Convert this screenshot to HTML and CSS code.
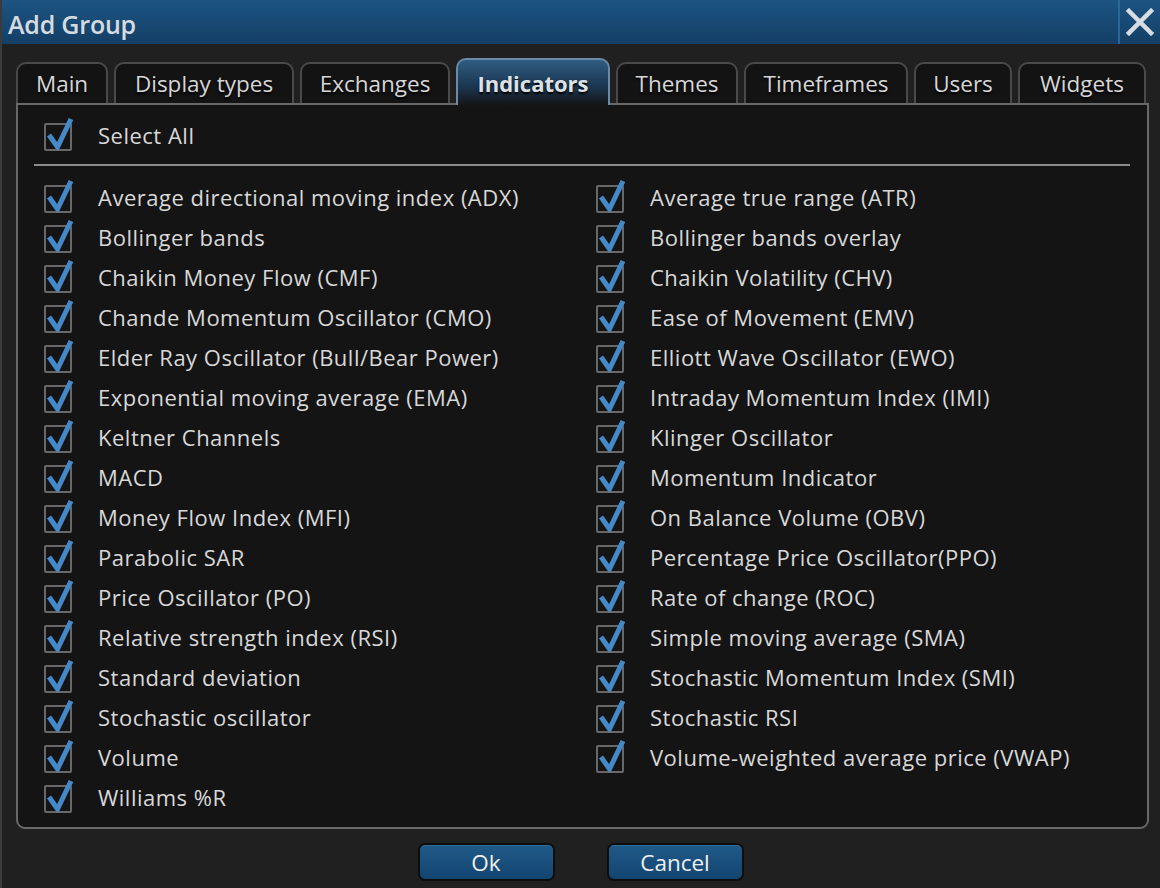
FILE: index.html
```html
<!DOCTYPE html>
<html>
<head>
<meta charset="utf-8">
<link rel="stylesheet" href="styles.css">
</head>
<body>
<div class="window">
  <div class="titlebar">
    <div class="title">Add Group</div>
    <div class="close">
      <svg width="28" height="28" viewBox="0 0 28 28"><path d="M3 3 L25 25 M25 3 L3 25" stroke="#d8dde2" stroke-width="4.5" stroke-linecap="square"/></svg>
    </div>
  </div>
  <div class="content">
    <div class="tabs">
      <div class="tab t-main">Main</div>
      <div class="tab t-display">Display types</div>
      <div class="tab t-exch">Exchanges</div>
      <div class="tab active t-ind">Indicators</div>
      <div class="tab t-themes">Themes</div>
      <div class="tab t-tf">Timeframes</div>
      <div class="tab t-users">Users</div>
      <div class="tab t-widgets">Widgets</div>
    </div>
    <div class="panel">
      <div class="item selectall"><span class="cb"></span><span class="label">Select All</span></div>
      <div class="sep"></div>
      <div class="grid">
        <div class="item"><span class="cb"></span><span class="label">Average directional moving index (ADX)</span></div>
        <div class="item"><span class="cb"></span><span class="label">Average true range (ATR)</span></div>
        <div class="item"><span class="cb"></span><span class="label">Bollinger bands</span></div>
        <div class="item"><span class="cb"></span><span class="label">Bollinger bands overlay</span></div>
        <div class="item"><span class="cb"></span><span class="label">Chaikin Money Flow (CMF)</span></div>
        <div class="item"><span class="cb"></span><span class="label">Chaikin Volatility (CHV)</span></div>
        <div class="item"><span class="cb"></span><span class="label">Chande Momentum Oscillator (CMO)</span></div>
        <div class="item"><span class="cb"></span><span class="label">Ease of Movement (EMV)</span></div>
        <div class="item"><span class="cb"></span><span class="label">Elder Ray Oscillator (Bull/Bear Power)</span></div>
        <div class="item"><span class="cb"></span><span class="label">Elliott Wave Oscillator (EWO)</span></div>
        <div class="item"><span class="cb"></span><span class="label">Exponential moving average (EMA)</span></div>
        <div class="item"><span class="cb"></span><span class="label">Intraday Momentum Index (IMI)</span></div>
        <div class="item"><span class="cb"></span><span class="label">Keltner Channels</span></div>
        <div class="item"><span class="cb"></span><span class="label">Klinger Oscillator</span></div>
        <div class="item"><span class="cb"></span><span class="label">MACD</span></div>
        <div class="item"><span class="cb"></span><span class="label">Momentum Indicator</span></div>
        <div class="item"><span class="cb"></span><span class="label">Money Flow Index (MFI)</span></div>
        <div class="item"><span class="cb"></span><span class="label">On Balance Volume (OBV)</span></div>
        <div class="item"><span class="cb"></span><span class="label">Parabolic SAR</span></div>
        <div class="item"><span class="cb"></span><span class="label">Percentage Price Oscillator(PPO)</span></div>
        <div class="item"><span class="cb"></span><span class="label">Price Oscillator (PO)</span></div>
        <div class="item"><span class="cb"></span><span class="label">Rate of change (ROC)</span></div>
        <div class="item"><span class="cb"></span><span class="label">Relative strength index (RSI)</span></div>
        <div class="item"><span class="cb"></span><span class="label">Simple moving average (SMA)</span></div>
        <div class="item"><span class="cb"></span><span class="label">Standard deviation</span></div>
        <div class="item"><span class="cb"></span><span class="label">Stochastic Momentum Index (SMI)</span></div>
        <div class="item"><span class="cb"></span><span class="label">Stochastic oscillator</span></div>
        <div class="item"><span class="cb"></span><span class="label">Stochastic RSI</span></div>
        <div class="item"><span class="cb"></span><span class="label">Volume</span></div>
        <div class="item"><span class="cb"></span><span class="label">Volume-weighted average price (VWAP)</span></div>
        <div class="item"><span class="cb"></span><span class="label">Williams %R</span></div>
      </div>
    </div>
    <div class="buttons">
      <div class="btn">Ok</div>
      <div class="btn">Cancel</div>
    </div>
  </div>
</div>
</body>
</html>
```
FILE: styles.css
```css
* { box-sizing: border-box; }
html, body { margin: 0; padding: 0; }
body {
  width: 1160px;
  height: 888px;
  background: #202020;
  font-family: "Open Sans", "Noto Sans", sans-serif;
  color: #d8d8d8;
  overflow: hidden;
}
.window {
  width: 1160px;
  height: 888px;
  display: flex;
  flex-direction: column;
  border-left: 2px solid #3a3a3a;
}
.titlebar {
  height: 44px;
  background: linear-gradient(#1c5482, #143f66);
  display: flex;
  align-items: center;
  justify-content: space-between;
}
.title {
  font-size: 25px;
  color: #d6dbe0;
  padding-left: 6px;
  padding-top: 3px;
  font-weight: 600;
  letter-spacing: -0.2px;
}
.close {
  width: 42px;
  height: 44px;
  border-left: 2px solid #2b6898;
  display: flex;
  align-items: center;
  justify-content: center;
}
.content {
  flex: 1;
  padding: 14px 11px 0 14px;
  display: flex;
  flex-direction: column;
}
.tabs {
  display: flex;
  align-items: flex-end;
  height: 45px;
  gap: 6px;
  position: relative;
  z-index: 1;
}
.tab {
  height: 41px;
  background: #131313;
  border: 2px solid #4a4a4a;
  border-bottom: none;
  border-radius: 10px 10px 0 0;
  font-size: 22.5px;
  color: #d6d6d6;
  text-shadow: 0 2px 2px #000;
  display: flex;
  align-items: center;
  justify-content: center;
}
.tab.active {
  background: linear-gradient(#2f5c82, #1b3550 60%, #151515);
  border-color: #6a8aa5;
  font-weight: 700;
  font-size: 22px;
  color: #dde2e6;
  margin-bottom: -2px;
  height: 47px;
}
.t-main { width: 92px; }
.t-display { width: 180px; }
.t-exch { width: 150px; }
.t-ind { width: 154px; }
.t-themes { width: 122px; }
.t-tf { width: 164px; }
.t-users { width: 98px; }
.t-widgets { width: 128px; }
.panel {
  width: 1133px;
  height: 726px;
  background: #141414;
  border: 2px solid #686868;
  border-radius: 0 0 9px 9px;
  padding: 11px 0 0 26px;
}
.item {
  display: flex;
  align-items: center;
  height: 40px;
}
.cb {
  width: 28px;
  height: 28px;
  border: 2px solid #686868;
  border-radius: 2px;
  position: relative;
  flex: none;
  margin-top: 2px;
}
.cb::after {
  content: "";
  position: absolute;
  left: 0;
  top: -9px;
  width: 28px;
  height: 34px;
  background: url("data:image/svg+xml;utf8,<svg xmlns='http://www.w3.org/2000/svg' width='28' height='34' viewBox='0 0 28 34'><path d='M3 19 L11.5 31 L25 3' fill='none' stroke='%234589c9' stroke-width='5' stroke-linejoin='miter'/></svg>") no-repeat;
}
.label {
  margin-left: 26px;
  font-size: 22px;
  letter-spacing: 0.5px;
  color: #d8d8d8;
  white-space: nowrap;
  margin-top: -3px;
}
.sep {
  height: 2px;
  background: #8a8a8a;
  width: 1096px;
  margin: 8px 0 12px -10px;
}
.grid {
  display: grid;
  grid-template-columns: 552px 1fr;
}
.buttons {
  display: flex;
  justify-content: center;
  gap: 52px;
  padding-top: 14px;
  padding-right: 4px;
}
.btn {
  width: 137px;
  height: 38px;
  border: 2px solid #0d0d0d;
  border-radius: 7px;
  background: linear-gradient(#1f5a88, #134470);
  color: #f0f0f0;
  font-size: 22.5px;
  display: flex;
  align-items: center;
  justify-content: center;
  box-shadow: inset 0 1px 0 #2f6c9a;
}
```
